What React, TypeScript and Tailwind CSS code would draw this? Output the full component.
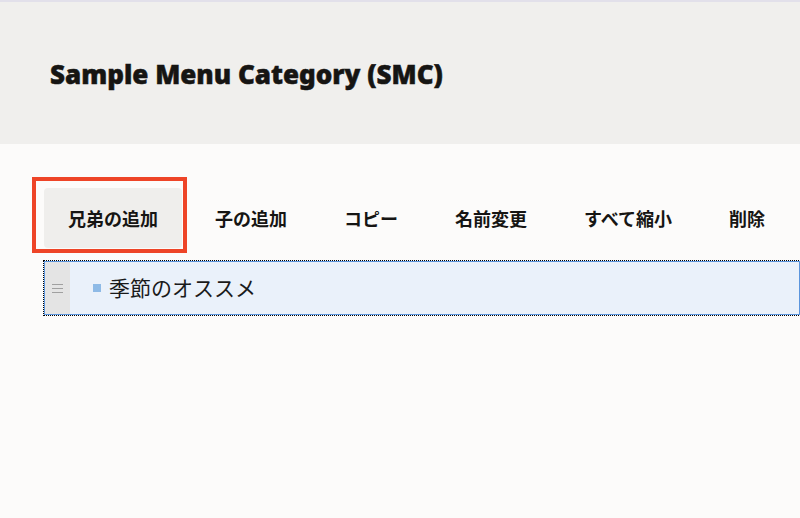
import React from "react";

const buttons = ["兄弟の追加", "子の追加", "コピー", "名前変更", "すべて縮小", "削除"];

const App: React.FC = () => {
    return (
        <div className="min-h-[518px] w-[800px] bg-[#fcfbfa] font-['Noto_Sans','Noto_Sans_CJK_JP',sans-serif] text-[#161513] overflow-hidden">
            <div className="h-[144px] bg-[#f0efed] border-t-2 border-[#e2e0ea] flex items-center pl-[50px]">
                <h1 className="text-[26px] font-black mt-[2px] [-webkit-text-stroke:0.5px_#161513]">Sample Menu Category (SMC)</h1>
            </div>
            <div className="pl-[44px] pt-[44px]">
                <div className="relative flex gap-[9px]">
                    {buttons.map((b, i) => (
                        <button
                            key={b}
                            className={`h-[60px] px-[24px] rounded-[4px] text-[18px] font-bold font-['Noto_Sans_CJK_JP',sans-serif] ${i == 0 ? 'bg-[#efeeec]' : ''}`}
                        >
                            {b}
                        </button>
                    ))}
                    <div className="absolute left-[-12px] top-[-11px] w-[155px] h-[76px] border-4 border-[#ee4427] pointer-events-none" />
                </div>
                <div className="mt-[13px] outline-1 outline-dotted outline-black border border-[#5b95dd] bg-[#eaf1fa] h-[54px] flex items-stretch">
                    <div className="w-[25px] bg-[#e4e4e4] flex flex-col justify-center items-center gap-[3px]">
                        <span className="block w-[11px] h-px bg-[#a0a0a0]" />
                        <span className="block w-[11px] h-px bg-[#a0a0a0]" />
                        <span className="block w-[11px] h-px bg-[#a0a0a0]" />
                    </div>
                    <div className="flex items-center pl-[23px]">
                        <span className="block w-[8px] h-[8px] bg-[#8ebae6] mr-[8px]" />
                        <span className="text-[21px] text-[#1a1a1a] font-['Noto_Sans_CJK_JP',sans-serif]">季節のオススメ</span>
                    </div>
                </div>
            </div>
        </div>
    );
};

export default App;
